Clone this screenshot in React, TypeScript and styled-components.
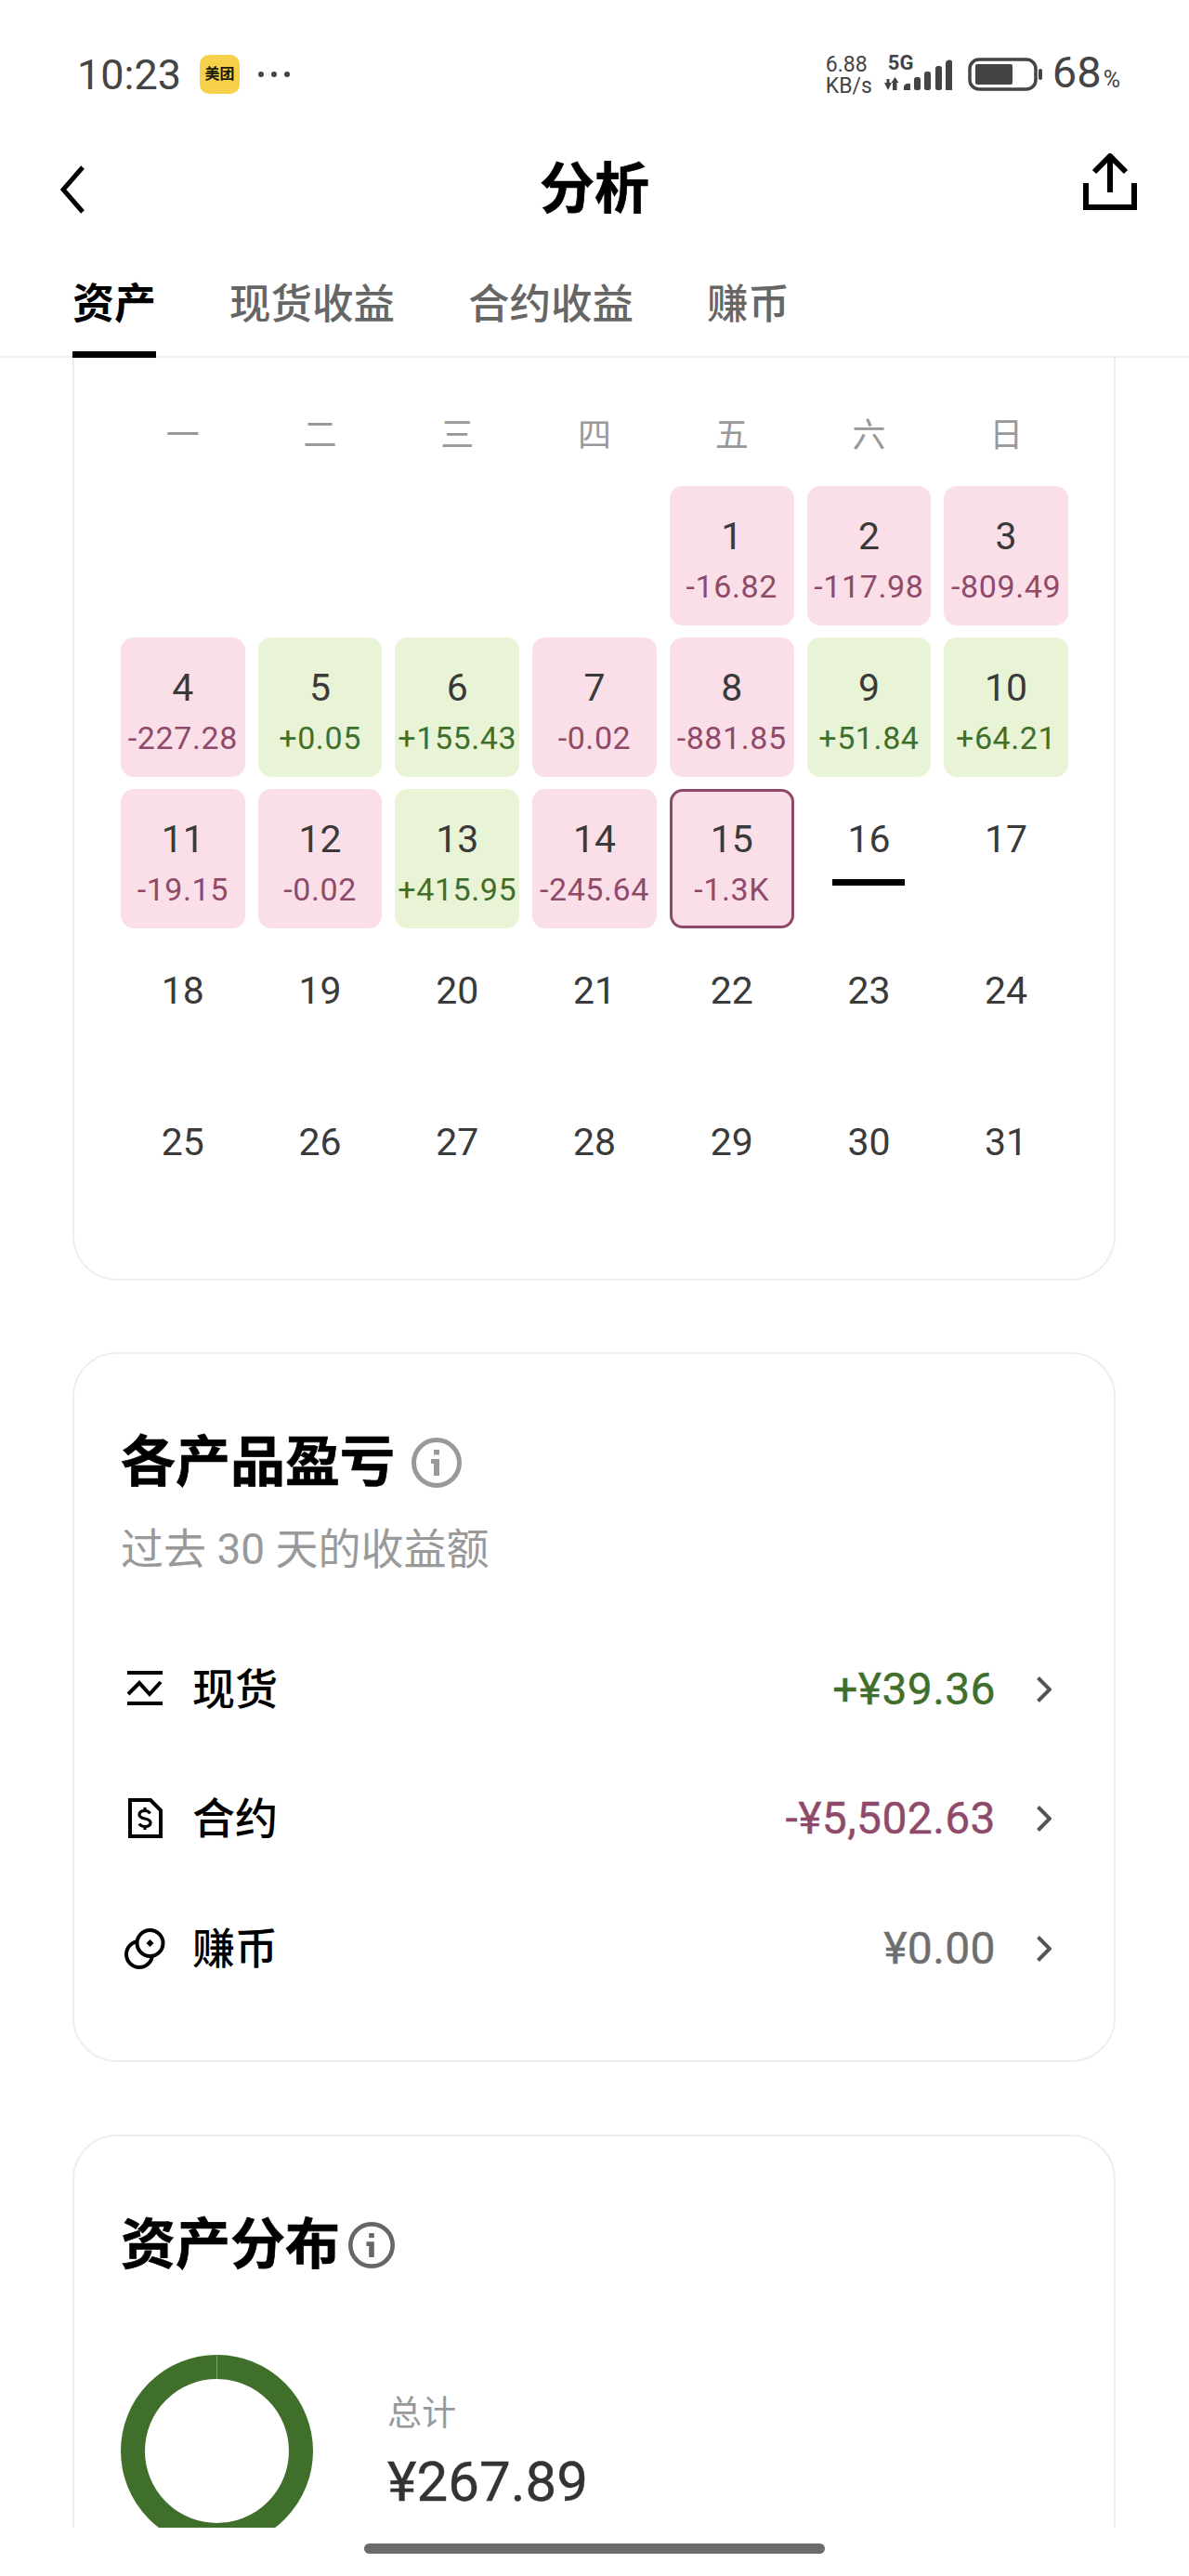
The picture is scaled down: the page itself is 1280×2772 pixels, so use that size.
import React from "react";
import styled, { createGlobalStyle } from "styled-components";

const FONT = `Roboto, "Noto Sans CJK SC", sans-serif`;
const RED = "#8f4a6b";
const GREEN = "#3f6f2a";

const Global = createGlobalStyle`
  html, body { margin: 0; padding: 0; background: #fff; }
  body { font-family: ${FONT}; color: #333; }
  * { box-sizing: border-box; }
`;

const Page = styled.div`
  width: 1280px;
  height: 2772px;
  display: flex;
  flex-direction: column;
  overflow: hidden;
  background: #fff;
`;

const TopBar = styled.header`
  height: 385px;
  flex: none;
  box-shadow: inset 0 -2px 0 #eeeeee;
`;

const StatusBar = styled.div`
  height: 160px;
  padding: 0 74px 0 83px;
  display: flex;
  align-items: center;
  justify-content: space-between;
  color: #444;
`;

const StatusGroup = styled.div`
  display: flex;
  align-items: center;
`;

const Clock = styled.span`
  font-size: 45px;
  line-height: 50px;
  padding-top: 2px;
  margin-right: 20px;
`;

const AppBadge = styled.span`
  width: 43px;
  height: 42px;
  border-radius: 10px;
  background: #f7d14a;
  color: #1d1a0a;
  font-size: 16px;
  font-weight: 700;
  line-height: 42px;
  text-align: center;
  white-space: nowrap;
  margin-right: 20px;
`;

const Speed = styled.span`
  display: flex;
  flex-direction: column;
  font-size: 23px;
  line-height: 23px;
  width: 63px;
  padding-top: 2px;
`;

const Network = styled.span`
  position: relative;
  display: block;
  width: 73px;
  height: 36px;
  margin-right: 17px;
`;

const NetLabel = styled.span`
  position: absolute;
  left: 4px;
  top: -5px;
  font-size: 22px;
  line-height: 22px;
  font-weight: 700;
`;

const Percent = styled.span`
  display: flex;
  align-items: baseline;
  margin-left: 10px;
  padding-top: 4px;
  font-size: 47px;
  line-height: 50px;
  small {
    font-size: 25px;
    margin-left: 2px;
  }
`;

const NavRow = styled.div`
  height: 88px;
  padding: 0 56px;
  display: grid;
  grid-template-columns: 1fr auto 1fr;
  align-items: center;
`;

const Title = styled.h1`
  margin: 0;
  font-size: 59px;
  line-height: 70px;
  font-weight: 700;
  color: #000;
  -webkit-text-stroke: 0.7px #000;
`;

const BackIcon = styled.svg`
  display: block;
  margin-left: 9px;
`;

const ShareIcon = styled.svg`
  display: block;
  justify-self: end;
  align-self: start;
  margin-top: 5px;
`;

const Tabs = styled.nav`
  display: flex;
  gap: 79px;
  padding-left: 78px;
`;

const Tab = styled.span<{ $active?: boolean }>`
  padding: 52px 0 22px;
  font-size: ${(p) => (p.$active ? 45 : 44.5)}px;
  line-height: 56px;
  white-space: nowrap;
  font-weight: ${(p) => (p.$active ? 700 : 500)};
  color: ${(p) => (p.$active ? "#000" : "#666")};
  border-bottom: 7px solid ${(p) => (p.$active ? "#000" : "transparent")};
`;

const Viewport = styled.main`
  height: 2335px;
  flex: none;
  overflow: hidden;
  padding: 0 79px 0 78px;
`;

const Card = styled.section`
  border: 2px solid #eeeeee;
  border-radius: 48px;
`;

const CalendarCard = styled(Card)`
  border-top: none;
  border-radius: 0 0 48px 48px;
  padding: 57px 49px 51px 50px;
`;

const WeekRow = styled.div`
  display: grid;
  grid-template-columns: repeat(7, 1fr);
  column-gap: 14px;
  margin-bottom: 27px;
`;

const WeekDay = styled.span`
  text-align: center;
  font-size: 36px;
  line-height: 54px;
  color: #999;
`;

const DayGrid = styled.div`
  display: grid;
  grid-template-columns: repeat(7, 1fr);
  grid-auto-rows: 150px;
  gap: 13px 14px;
`;

const Day = styled.div<{ $tone?: "up" | "down"; $selected?: boolean }>`
  border-radius: 14px;
  padding-top: 34px;
  text-align: center;
  background: ${(p) =>
    p.$tone === "up" ? "#e9f3d6" : p.$tone === "down" ? "#fbdfe8" : "transparent"};
  color: ${(p) => (p.$tone === "up" ? GREEN : RED)};
  box-shadow: ${(p) => (p.$selected ? `inset 0 0 0 3px ${RED}` : "none")};
`;

const DayNum = styled.div`
  font-size: 41px;
  line-height: 40px;
  color: #3a3a3a;
`;

const DayValue = styled.div`
  margin-top: 14px;
  font-size: 34px;
  line-height: 40px;
  white-space: nowrap;
  letter-spacing: 0.6px;
`;

const TodayMark = styled.div`
  width: 78px;
  height: 7px;
  margin: 23px auto 0;
  background: #000;
`;

const ProductCard = styled(Card)`
  margin-top: 77px;
  padding: 83px 50px 50px 50px;
`;

const Heading = styled.div`
  display: flex;
  align-items: center;
  gap: 18px;
`;

const HeadingText = styled.h2`
  margin: 0;
  font-size: 59px;
  line-height: 68px;
  font-weight: 700;
  color: #000;
  -webkit-text-stroke: 0.7px #000;
`;

const Sub = styled.div`
  margin-top: 32px;
  font-size: 46px;
  line-height: 54px;
  color: #999;
`;

const Rows = styled.div`
  margin-top: 54px;
`;

const Row = styled.div`
  height: 139.5px;
  display: flex;
  align-items: center;
`;

const RowIcon = styled.svg`
  flex: none;
  margin-right: 25px;
`;

const RowLabel = styled.span`
  font-size: 46px;
  line-height: 56px;
  font-weight: 500;
  color: #000;
`;

const Amount = styled.span<{ $color: string }>`
  margin-left: auto;
  font-size: 48px;
  line-height: 56px;
  letter-spacing: 0.4px;
  white-space: nowrap;
  color: ${(p) => p.$color};
  -webkit-text-stroke: 0.4px ${(p) => p.$color};
`;

const Chevron = styled.svg`
  flex: none;
  margin-left: 44px;
  margin-right: 17px;
`;

const AssetCard = styled(Card)`
  padding: 83px 50px 60px 50px;
  margin-top: 78px;
`;

const AssetHeading = styled(Heading)`
  gap: 9px;
`;

const DonutRow = styled.div`
  margin-top: 84px;
  display: flex;
  align-items: center;
  gap: 80px;
`;

const Donut = styled.svg`
  display: block;
  flex: none;
`;

const TotalCol = styled.div`
  display: flex;
  flex-direction: column;
  gap: 13px;
  padding-top: 4px;
`;

const TotalLabel = styled.div`
  font-size: 37px;
  line-height: 50px;
  color: #999;
`;

const TotalValue = styled.div`
  font-size: 60px;
  line-height: 70px;
  color: #333;
  -webkit-text-stroke: 0.4px #333;
`;

const HomeArea = styled.footer`
  flex: 1;
  display: flex;
  justify-content: center;
  padding-top: 17px;
`;

const HomeBar = styled.div`
  width: 496px;
  height: 11px;
  border-radius: 6px;
  background: #6b6b6b;
`;

const Info = ({ size, color }: { size: number; color: string }) => (
  <svg width={size} height={size} viewBox="0 0 54 54" style={{ flex: "none" }}>
    <circle cx="27" cy="27" r="24.5" fill="none" stroke={color} strokeWidth="5" />
    <rect x="24" y="13" width="6" height="5.5" fill={color} />
    <path d="M21 23h9v18h-6V28h-3z" fill={color} />
  </svg>
);

const SignalIcon = () => (
  <svg width="73" height="34" viewBox="0 0 73 34" style={{ position: "absolute", left: 0, bottom: 0 }}>
    <g fill="#444">
      <path d="M0 25h2.500v-4h3v4H8l-4 8z" />
      <path d="M9 33V25H7.500l4-6 4 6H13.500v8z" />
      <path d="M21 33v-3q0-3 3-4 4-1 4 1v6z" />
      <rect x="32" y="19" width="7" height="14" rx="2.500" />
      <rect x="43" y="13" width="7" height="20" rx="2.500" />
      <rect x="55" y="7" width="7" height="26" rx="2.500" />
      <path d="M66 33V4q0-3 3.500-3.500 3.500-.5 3.500 2V33z" />
    </g>
  </svg>
);

const BatteryIcon = () => (
  <svg width="81" height="36" viewBox="0 0 81 36" style={{ display: "block" }}>
    <rect x="2" y="2" width="71" height="32" rx="10" fill="none" stroke="#444" strokeWidth="3.5" />
    <rect x="8" y="7" width="40" height="22" rx="2" fill="#444" />
    <rect x="76" y="12" width="4" height="12" rx="2" fill="#444" />
  </svg>
);

const Dots = () => (
  <svg width="34" height="8" viewBox="0 0 34 8" style={{ display: "block" }}>
    <g fill="#444">
      <circle cx="3" cy="4" r="3" />
      <circle cx="17" cy="4" r="3" />
      <circle cx="31" cy="4" r="3" />
    </g>
  </svg>
);

const SpotIcon = () => (
  <RowIcon width="52" height="52" viewBox="0 0 52 52" fill="none" stroke="#000" strokeWidth="4">
    <path d="M7 8h38M7 41h38" />
    <path d="M8 31 20 19 31 31 43 18" strokeLinejoin="miter" />
  </RowIcon>
);

const ContractIcon = () => (
  <RowIcon width="52" height="52" viewBox="0 0 52 52" fill="none" stroke="#000" strokeWidth="4">
    <path d="M10 6H32L43 17V45H10Z" />
    <path
      d="M31.500 20.500c-1-2-3-3-5.500-3-3.500 0-6 1.500-6 4.200 0 6 12 2.600 12 8.600 0 2.800-2.500 4.200-6 4.200-2.500 0-4.800-1-6-3M26 14v3.500M26 34.500V38"
      strokeWidth="3.200"
    />
  </RowIcon>
);

const EarnIcon = () => (
  <RowIcon width="52" height="52" viewBox="0 0 52 52" fill="none" stroke="#000" strokeWidth="4">
    <circle cx="20" cy="32" r="14" />
    <circle cx="31.500" cy="20" r="14" fill="#fff" />
    <path d="M31.500 16l4 4-4 4-4-4z" fill="#000" stroke="none" />
  </RowIcon>
);

const ChevronRight = () => (
  <Chevron width="16" height="28" viewBox="0 0 16 28" fill="none" stroke="#555" strokeWidth="4">
    <path d="M1.500 1.500 14 14 1.500 26.500" />
  </Chevron>
);

type Cell = { n: number; v?: string; tone?: "up" | "down"; selected?: boolean; today?: boolean };

const cells: Cell[] = [
  { n: 1, v: "-16.82", tone: "down" },
  { n: 2, v: "-117.98", tone: "down" },
  { n: 3, v: "-809.49", tone: "down" },
  { n: 4, v: "-227.28", tone: "down" },
  { n: 5, v: "+0.05", tone: "up" },
  { n: 6, v: "+155.43", tone: "up" },
  { n: 7, v: "-0.02", tone: "down" },
  { n: 8, v: "-881.85", tone: "down" },
  { n: 9, v: "+51.84", tone: "up" },
  { n: 10, v: "+64.21", tone: "up" },
  { n: 11, v: "-19.15", tone: "down" },
  { n: 12, v: "-0.02", tone: "down" },
  { n: 13, v: "+415.95", tone: "up" },
  { n: 14, v: "-245.64", tone: "down" },
  { n: 15, v: "-1.3K", tone: "down", selected: true },
  { n: 16, today: true },
  ...Array.from({ length: 15 }, (_, i) => ({ n: 17 + i })),
];

const weekdays = ["一", "二", "三", "四", "五", "六", "日"];
const tabs = ["资产", "现货收益", "合约收益", "赚币"];

export default function App() {
  return (
    <Page>
      <Global />
      <TopBar>
        <StatusBar>
          <StatusGroup>
            <Clock>10:23</Clock>
            <AppBadge>美团</AppBadge>
            <Dots />
          </StatusGroup>
          <StatusGroup>
            <Speed>
              <span>6.88</span>
              <span>KB/s</span>
            </Speed>
            <Network>
              <NetLabel>5G</NetLabel>
              <SignalIcon />
            </Network>
            <BatteryIcon />
            <Percent>
              68<small>%</small>
            </Percent>
          </StatusGroup>
        </StatusBar>
        <NavRow>
          <BackIcon width="26" height="52" viewBox="0 0 26 52" fill="none" stroke="#000" strokeWidth="5">
            <path d="M24 2 3 26l21 24" />
          </BackIcon>
          <Title>分析</Title>
          <ShareIcon width="58" height="61" viewBox="0 0 58 61" fill="none" stroke="#000" strokeWidth="6">
            <path d="M12 20 29 3l17 17M29 4v38" />
            <path d="M3 32v26h52V32" />
          </ShareIcon>
        </NavRow>
        <Tabs>
          {tabs.map((t, i) => (
            <Tab key={t} $active={i === 0}>
              {t}
            </Tab>
          ))}
        </Tabs>
      </TopBar>

      <Viewport>
        <CalendarCard>
          <WeekRow>
            {weekdays.map((d) => (
              <WeekDay key={d}>{d}</WeekDay>
            ))}
          </WeekRow>
          <DayGrid>
            {[0, 1, 2, 3].map((i) => (
              <div key={`blank-${i}`} />
            ))}
            {cells.map((c) => (
              <Day key={c.n} $tone={c.tone} $selected={c.selected}>
                <DayNum>{c.n}</DayNum>
                {c.v && <DayValue>{c.v}</DayValue>}
                {c.today && <TodayMark />}
              </Day>
            ))}
          </DayGrid>
        </CalendarCard>

        <ProductCard>
          <Heading>
            <HeadingText>各产品盈亏</HeadingText>
            <Info size={54} color="#999" />
          </Heading>
          <Sub>过去 30 天的收益额</Sub>
          <Rows>
            <Row>
              <SpotIcon />
              <RowLabel>现货</RowLabel>
              <Amount $color={GREEN}>+¥39.36</Amount>
              <ChevronRight />
            </Row>
            <Row>
              <ContractIcon />
              <RowLabel>合约</RowLabel>
              <Amount $color={RED}>-¥5,502.63</Amount>
              <ChevronRight />
            </Row>
            <Row>
              <EarnIcon />
              <RowLabel>赚币</RowLabel>
              <Amount $color="#6e6e6e">¥0.00</Amount>
              <ChevronRight />
            </Row>
          </Rows>
        </ProductCard>

        <AssetCard>
          <AssetHeading>
            <HeadingText>资产分布</HeadingText>
            <Info size={50} color="#666" />
          </AssetHeading>
          <DonutRow>
            <Donut width="207" height="207" viewBox="0 0 207 207">
              <circle cx="103.500" cy="103.500" r="90.500" fill="none" stroke="#3f6f2a" strokeWidth="26" />
              <rect x="103" y="0" width="1" height="26" fill="#7f9a8c" />
            </Donut>
            <TotalCol>
              <TotalLabel>总计</TotalLabel>
              <TotalValue>¥267.89</TotalValue>
            </TotalCol>
          </DonutRow>
        </AssetCard>
      </Viewport>

      <HomeArea>
        <HomeBar />
      </HomeArea>
    </Page>
  );
}
